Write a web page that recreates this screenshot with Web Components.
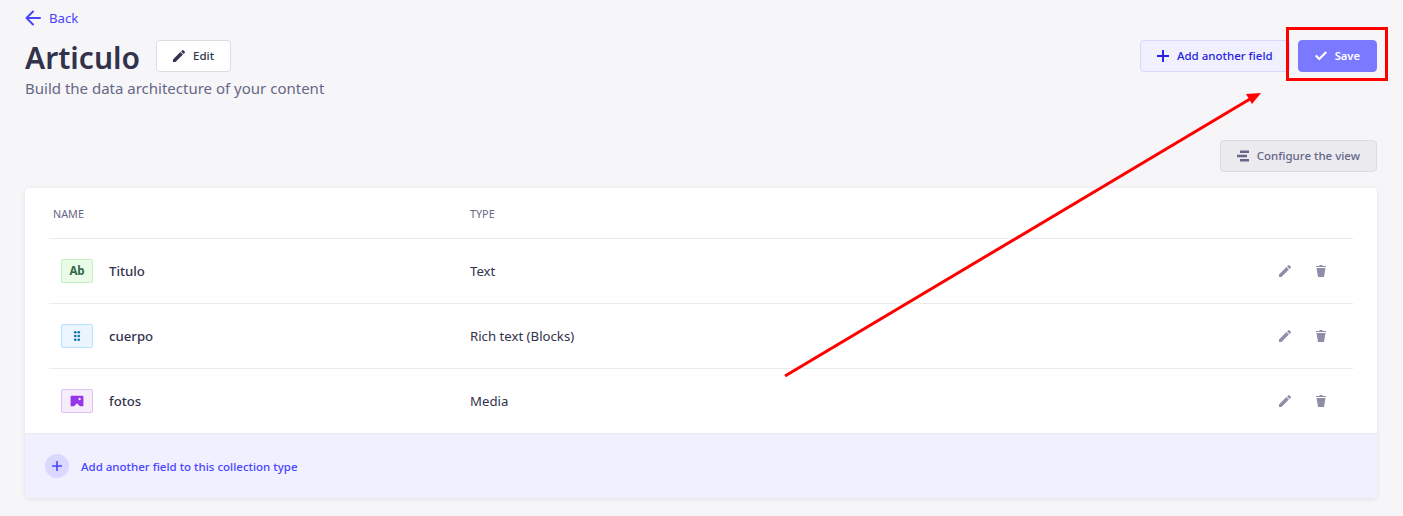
<!DOCTYPE html>
<html lang="en">
<head>
<meta charset="utf-8">
<title>Articulo</title>
<style>
  html, body { margin: 0; background: #f6f6f9; }
  body { font-family: "Noto Sans", "Open Sans", sans-serif; color: #32324d; }
</style>
</head>
<body>
<content-page></content-page>

<script>
const ICONS = {
  pencil: '<path d="M0 18.996V24h5.004L19.76 9.244l-5.004-5.004L0 18.996zM23.61 5.39a1.33 1.33 0 000-1.884L20.494.39a1.33 1.33 0 00-1.884 0l-2.44 2.44 5.004 5.004 2.437-2.444z"/>',
  trash: '<path d="M3.236 6.149a.2.2 0 00-.197.233L6 24h12l2.96-17.618a.2.2 0 00-.196-.233H3.236zM21.8 1.983c.11 0 .2.09.2.2v1.584a.2.2 0 01-.2.2H2.2a.2.2 0 01-.2-.2V2.183c0-.11.09-.2.2-.2h5.511c.9 0 1.631-1.09 1.631-1.983h5.316c0 .894.73 1.983 1.631 1.983H21.8z"/>',
  plus: '<path d="M24 13.604a.3.3 0 01-.3.3h-9.795V23.7a.3.3 0 01-.3.3h-3.21a.3.3 0 01-.3-.3v-9.795H.3a.3.3 0 01-.3-.3v-3.21a.3.3 0 01.3-.3h9.795V.3a.3.3 0 01.3-.3h3.21a.3.3 0 01.3.3v9.795H23.7a.3.3 0 01.3.3v3.21z"/>',
  check: '<path d="M8.553 21.004 0 12.45l3.03-3.03 5.523 5.522L20.97 2.526 24 5.556z"/>',
  layout: '<path d="M6 1h18v5H6zM0 9.500h20v5H0zM6 18h18v5H6z"/>',
  dots: '<circle cx="8.500" cy="4.500" r="2.700"/><circle cx="15.500" cy="4.500" r="2.700"/><circle cx="8.500" cy="12" r="2.700"/><circle cx="15.500" cy="12" r="2.700"/><circle cx="8.500" cy="19.500" r="2.700"/><circle cx="15.500" cy="19.500" r="2.700"/>',
  media: '<path fill-rule="evenodd" d="M2.500 3h19A1.500 1.500 0 0123 4.500v15a1.500 1.500 0 01-1.500 1.500H17l-5-5-5 5H2.500A1.500 1.500 0 011 19.500v-15A1.500 1.500 0 012.500 3zM16.500 6.500a2 2 0 100 4 2 2 0 000-4z"/>'
};

const svg = (name, size, color) =>
  `<svg width="${size}" height="${size}" viewBox="0 0 24 24" fill="${color}" aria-hidden="true">${ICONS[name]}</svg>`;

class UiButton extends HTMLElement {
  connectedCallback() {
    const icon = this.getAttribute('icon');
    this.attachShadow({ mode: 'open' }).innerHTML = `
      <style>
        :host {
          display: inline-flex;
          align-items: center;
          gap: 8px;
          height: 32px;
          box-sizing: border-box;
          padding: 0 16px;
          border: 1px solid var(--btn-border, #dcdce4);
          border-radius: 4px;
          background: var(--btn-bg, #fff);
          color: var(--btn-color, #32324d);
          font-size: var(--btn-size, 11.500px);
          font-weight: var(--btn-weight, 500);
          white-space: nowrap;
        }
        svg { display: block; flex: none; }
        span { margin-bottom: 2px; }
      </style>
      ${svg(icon, 12, 'currentColor')}
      <span><slot></slot></span>`;
  }
}

class FieldIcon extends HTMLElement {
  connectedCallback() {
    const type = this.getAttribute('type');
    const kinds = {
      text: { bg: '#eafbe7', border: '#c6f0c2', color: '#2f6846', inner: '<b>Ab</b>' },
      blocks: { bg: '#eaf5ff', border: '#b8e1ff', color: '#0c75af', inner: svg('dots', 12, '#0c75af') },
      media: { bg: '#f6ecfc', border: '#e0c1f4', color: '#9736e8', inner: svg('media', 14, '#9736e8') }
    };
    const k = kinds[type];
    this.attachShadow({ mode: 'open' }).innerHTML = `
      <style>
        :host {
          display: flex;
          align-items: center;
          justify-content: center;
          width: 32px;
          height: 24px;
          box-sizing: border-box;
          border: 1px solid ${k.border};
          border-radius: 2px;
          background: ${k.bg};
          color: ${k.color};
          font-size: 11.500px;
          flex: none;
        }
        svg { display: block; }
        b { margin-bottom: 2px; }
      </style>
      ${k.inner}`;
  }
}

class FieldRow extends HTMLElement {
  connectedCallback() {
    this.attachShadow({ mode: 'open' }).innerHTML = `
      <style>
        :host {
          display: grid;
          grid-template-columns: 421px 1fr auto;
          align-items: center;
          height: 65px;
          box-sizing: border-box;
          border-top: 1px solid #eaeaef;
          margin: 0 24px;
          font-size: 13.200px;
          color: #32324d;
        }
        .name { display: flex; align-items: center; gap: 16px; padding-left: 12px; font-weight: 500; }
        .actions { display: flex; gap: 24px; padding-right: 26px; }
        svg { display: block; }
      </style>
      <div class="name">
        <field-icon type="${this.getAttribute('kind')}"></field-icon>
        <span>${this.getAttribute('name')}</span>
      </div>
      <div class="label">${this.getAttribute('label')}</div>
      <div class="actions">${svg('pencil', 12, '#8e8ea9')}${svg('trash', 12, '#8e8ea9')}</div>`;
  }
}

class FieldsCard extends HTMLElement {
  connectedCallback() {
    this.attachShadow({ mode: 'open' }).innerHTML = `
      <style>
        :host {
          display: block;
          background: #fff;
          border-radius: 4px;
          box-shadow: 0 1px 4px rgba(33, 33, 52, 0.1);
          overflow: hidden;
        }
        .head {
          display: grid;
          grid-template-columns: 417px 1fr;
          height: 50px;
          align-items: center;
          padding: 0 28px;
          font-size: 10.800px;
          color: #666687;
          box-sizing: border-box;
        }
        .foot {
          display: flex;
          align-items: center;
          gap: 12px;
          height: 65px;
          box-sizing: border-box;
          padding-left: 20px;
          background: #f0f0ff;
          border-top: 1px solid #eaeaef;
          color: #4945ff;
          font-size: 11.500px;
          font-weight: 500;
        }
        .round {
          display: flex;
          align-items: center;
          justify-content: center;
          width: 24px;
          height: 24px;
          border-radius: 50%;
          background: #d9d8ff;
        }
      </style>
      <div class="head"><span>NAME</span><span>TYPE</span></div>
      <slot></slot>
      <div class="foot">
        <span class="round">${svg('plus', 10, '#4945ff')}</span>
        <span>Add another field to this collection type</span>
      </div>`;
  }
}

class PageHeader extends HTMLElement {
  connectedCallback() {
    this.attachShadow({ mode: 'open' }).innerHTML = `
      <style>
        :host { display: block; height: 140px; box-sizing: border-box; padding-top: 8px; }
        .back { display: flex; align-items: center; gap: 8px; height: 20px; color: #4945ff; font-size: 13.200px; }
        .back svg { display: block; }
        .row { display: flex; justify-content: space-between; align-items: flex-start; margin-top: 12px; }
        .title { display: flex; align-items: flex-start; gap: 16px; }
        h1 { margin: 0; font-size: 30px; line-height: 36px; font-weight: 600; color: #32324d; }
        .sub { font-size: 15px; line-height: 20px; color: #666687; margin-top: 2px; }
        .buttons { display: flex; gap: 8px; }
        .add { --btn-bg: #f0f0ff; --btn-border: #d9d8ff; --btn-color: #271fe0; }
        .save { --btn-bg: #7b79ff; --btn-border: #7b79ff; --btn-color: #fff; --btn-size: 11.200px; --btn-weight: 600; }
      </style>
      <div class="back">
        <svg width="16" height="16" viewBox="0 0 16 16" fill="none" stroke="#4945ff" stroke-width="2" stroke-linecap="round" stroke-linejoin="round" aria-hidden="true"><path d="M15 8H1.500M8 1.500 1.500 8 8 14.500"/></svg>
        <span>Back</span>
      </div>
      <div class="row">
        <div>
          <div class="title">
            <h1>Articulo</h1>
            <ui-button icon="pencil">Edit</ui-button>
          </div>
          <div class="sub">Build the data architecture of your content</div>
        </div>
        <div class="buttons">
          <ui-button class="add" icon="plus">Add another field</ui-button>
          <ui-button class="save" icon="check">Save</ui-button>
        </div>
      </div>`;
  }
}

class ContentPage extends HTMLElement {
  connectedCallback() {
    this.attachShadow({ mode: 'open' }).innerHTML = `
      <style>
        :host { display: block; position: relative; height: 516px; overflow: hidden; padding: 0 26px 0 25px; }
        .tools { display: flex; justify-content: flex-end; height: 48px; }
        .config { --btn-bg: #eaeaef; --btn-border: #dcdce4; --btn-color: #666687; }
        svg.note { position: absolute; left: 0; top: 0; pointer-events: none; }
      </style>
      <page-header></page-header>
      <div class="tools"><ui-button class="config" icon="layout">Configure the view</ui-button></div>
      <fields-card>
        <field-row kind="text" name="Titulo" label="Text"></field-row>
        <field-row kind="blocks" name="cuerpo" label="Rich text (Blocks)"></field-row>
        <field-row kind="media" name="fotos" label="Media"></field-row>
      </fields-card>
      <svg class="note" width="1403" height="516" fill="none">
        <rect x="1287.500" y="28.500" width="99" height="51" stroke="#f00" stroke-width="3"/>
        <path d="M785 376 L1250 99" stroke="#f00" stroke-width="3"/>
        <path d="M1261 93 L1246 94 L1252 104 Z" fill="#f00"/>
      </svg>`;
  }
}

customElements.define('ui-button', UiButton);
customElements.define('field-icon', FieldIcon);
customElements.define('field-row', FieldRow);
customElements.define('fields-card', FieldsCard);
customElements.define('page-header', PageHeader);
customElements.define('content-page', ContentPage);
</script>
</body>
</html>
